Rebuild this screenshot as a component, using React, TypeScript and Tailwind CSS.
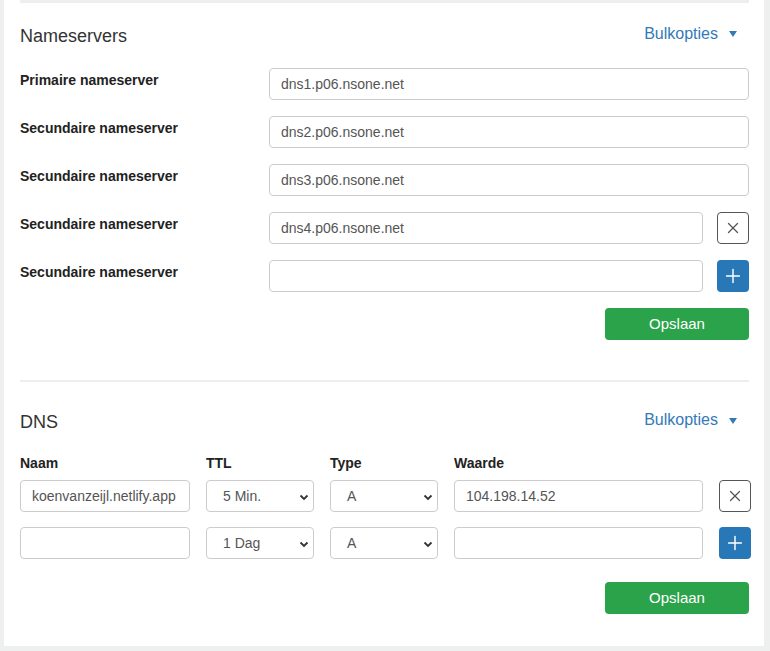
import { X, Plus } from "lucide-react";

const font = { fontFamily: '"Liberation Sans", Arial, sans-serif' };

function Bulk() {
  return (
    <button className="flex items-center gap-[11px] text-[16px] text-[#337ab7] pr-[12px]">
      Bulkopties
      <svg width="8" height="6" viewBox="0 0 8 6" className="mt-[1px]">
        <path d="M0 0h8L4 6z" fill="#337ab7" />
      </svg>
    </button>
  );
}

function TextInput({ value, className = "" }: { value: string; className?: string }) {
  return (
    <input
      readOnly
      value={value}
      className={`h-8 rounded-[4px] border border-[#ccc] bg-white pl-[11px] text-[14px] text-[#555] outline-none ${className}`}
    />
  );
}

function Select({ value, className = "" }: { value: string; className?: string }) {
  return (
    <div className={`relative h-8 rounded-[4px] border border-[#ccc] bg-white flex items-center pl-4 text-[14px] text-[#555] ${className}`}>
      {value}
      <svg width="10" height="7" viewBox="0 0 10 7" className="absolute right-[4px] top-[13px]">
        <path d="M1.5 1.5L5 5l3.5-3.5" stroke="#333" strokeWidth="1.8" fill="none" />
      </svg>
    </div>
  );
}

function RemoveBtn() {
  return (
    <button className="w-8 h-8 shrink-0 rounded-[4px] border border-[#555] bg-white flex items-center justify-center">
      <X size={18} strokeWidth={1.7} color="#555" />
    </button>
  );
}

function AddBtn() {
  return (
    <button className="w-8 h-8 shrink-0 rounded-[4px] bg-[#2878b8] flex items-center justify-center">
      <Plus size={22} strokeWidth={1.6} color="#fff" />
    </button>
  );
}

function SaveBtn() {
  return (
    <div className="flex justify-end">
      <button className="w-[144px] h-8 rounded-[4px] bg-[#2ba34a] text-white text-[15px]">Opslaan</button>
    </div>
  );
}

const nameservers = [
  { label: "Primaire nameserver", value: "dns1.p06.nsone.net", action: null },
  { label: "Secundaire nameserver", value: "dns2.p06.nsone.net", action: null },
  { label: "Secundaire nameserver", value: "dns3.p06.nsone.net", action: null },
  { label: "Secundaire nameserver", value: "dns4.p06.nsone.net", action: "remove" },
  { label: "Secundaire nameserver", value: "", action: "add" },
];

export default function App() {
  return (
    <div style={font} className="h-[651px] w-[770px] bg-[#eef0ef] pl-1 pr-[6px] pb-[5px]">
      <div className="h-full bg-white pl-4 pr-[15px]">
        <div className="h-[3px] bg-[#eeeeee]" />

        {/* Nameservers */}
        <div className="mt-[22px] flex items-center justify-between h-[22px]">
          <h2 className="text-[18px] text-[#333]">Nameservers</h2>
          <div className="-mt-[5px]"><Bulk /></div>
        </div>

        <div className="mt-[21px] flex flex-col gap-4">
          {nameservers.map((ns, i) => (
            <div key={i} className="flex">
              <label className="w-[249px] shrink-0 pt-[4px] text-[14px] font-bold text-[#222] leading-4">{ns.label}</label>
              <div className="flex-1 flex gap-[14px]">
                <TextInput value={ns.value} className="flex-1 min-w-0" />
                {ns.action === "remove" && <RemoveBtn />}
                {ns.action === "add" && <AddBtn />}
              </div>
            </div>
          ))}
        </div>

        <div className="mt-4">
          <SaveBtn />
        </div>

        <div className="mt-[40px] h-[2px] bg-[#eeeeee]" />

        {/* DNS */}
        <div className="mt-[29px] flex items-center justify-between h-[22px]">
          <h2 className="text-[18px] text-[#333]">DNS</h2>
          <div className="-mt-[4px]"><Bulk /></div>
        </div>

        <div className="mt-[22px] grid grid-cols-[170px_108px_108px_249px_32px] gap-x-4 gap-y-[15px] text-[14px]">
          <div className="font-bold text-[#222] leading-4 -mb-[6px]">Naam</div>
          <div className="font-bold text-[#222] leading-4 -mb-[6px]">TTL</div>
          <div className="font-bold text-[#222] leading-4 -mb-[6px]">Type</div>
          <div className="font-bold text-[#222] leading-4 -mb-[6px]">Waarde</div>
          <div />

          <TextInput value="koenvanzeijl.netlify.app" />
          <Select value="5 Min." />
          <Select value="A" />
          <TextInput value="104.198.14.52" />
          <RemoveBtn />

          <TextInput value="" />
          <Select value="1 Dag" />
          <Select value="A" />
          <TextInput value="" />
          <AddBtn />
        </div>

        <div className="mt-[23px]">
          <SaveBtn />
        </div>
      </div>
    </div>
  );
}
